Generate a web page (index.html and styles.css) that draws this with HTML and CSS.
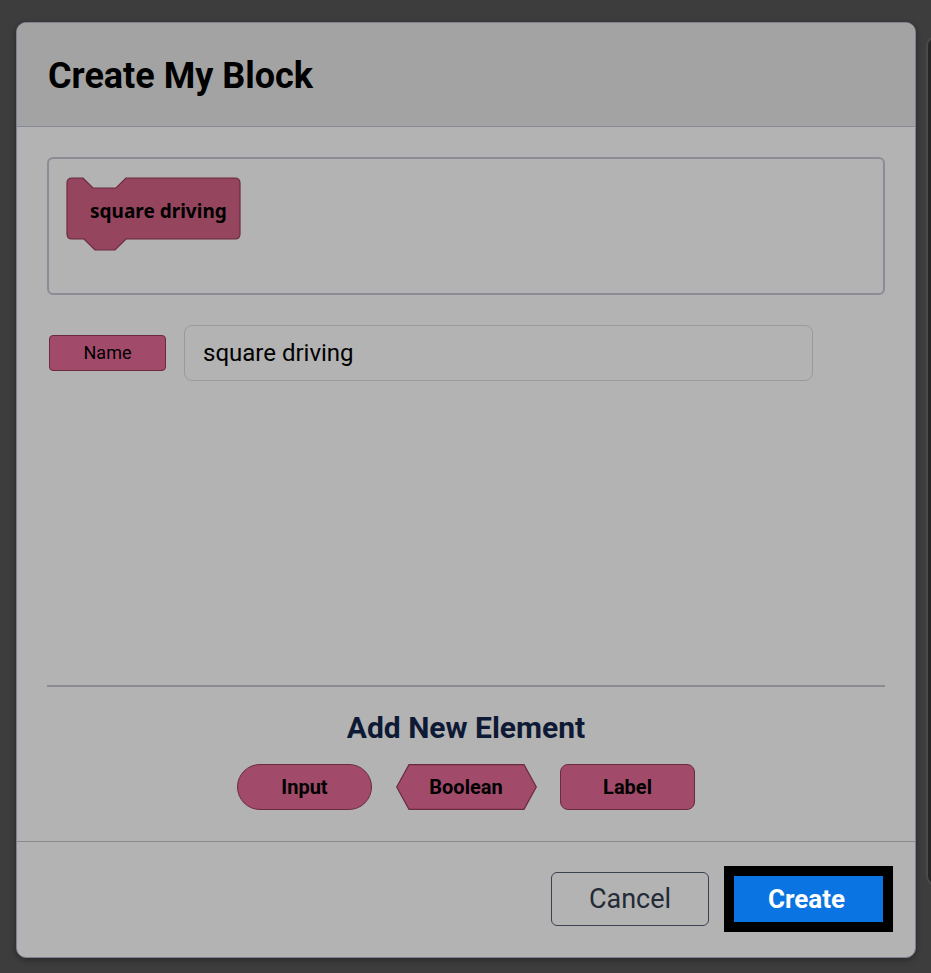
FILE: index.html
```html
<!DOCTYPE html>
<html lang="en">
<head>
    <meta charset="UTF-8">
    <meta name="viewport" content="width=device-width, initial-scale=1.0">
    <title>Create My Block</title>
    <link rel="stylesheet" href="styles.css">
</head>
<body>

    <div class="side-panel"></div>

    <div class="modal">
        <div class="modal-header">
            <h1>Create My Block</h1>
        </div>

        <div class="modal-body">
            <div class="preview">
                <div class="block">
                    <svg class="block-shape" width="176" height="74" viewBox="0 0 176 74">
                        <path d="M1,6 Q1,1 6,1 L17,1 L27,11 L50,11 L60,1 L169,1 Q174,1 174,6 L174,57 Q174,62 169,62 L60,62 L49,73 L29,73 L18,62 L6,62 Q1,62 1,57 Z"
                              fill="#95455e" stroke="#6a2b40" stroke-width="1.2"/>
                    </svg>
                    <span class="block-label">square driving</span>
                </div>
            </div>

            <div class="name-row">
                <span class="name-tag">Name</span>
                <input class="name-input" type="text" value="square driving">
            </div>

            <div class="spacer"></div>

            <div class="add-section">
                <h2>Add New Element</h2>
                <div class="element-buttons">
                    <button class="el-btn el-input">Input</button>
                    <button class="el-btn el-boolean">
                        <svg class="hex" width="141" height="46" viewBox="0 0 141 46">
                            <polygon points="13,0.6 128,0.6 140.3,23 128,45.4 13,45.4 0.7,23" fill="#a14a6a" stroke="#6a2b40" stroke-width="1.2"/>
                        </svg>
                        <span>Boolean</span>
                    </button>
                    <button class="el-btn el-label">Label</button>
                </div>
            </div>
        </div>

        <div class="modal-footer">
            <button class="btn-cancel">Cancel</button>
            <button class="btn-create">Create</button>
        </div>
    </div>

</body>
</html>
```

FILE: styles.css
```css
* {
    margin: 0;
    padding: 0;
    box-sizing: border-box;
}

body {
    font-family: Roboto, 'Liberation Sans', sans-serif;
    background-color: #3d3d3d;
    width: 931px;
    height: 973px;
    overflow: hidden;
    position: relative;
}

/* editor panel peeking out behind the dialog */
.side-panel {
    position: absolute;
    left: 926px;
    top: 36px;
    width: 30px;
    height: 850px;
    background: #262626;
    border: 2px solid #4a4a4a;
    border-radius: 10px;
}

.modal {
    position: absolute;
    left: 16px;
    top: 22px;
    width: 900px;
    height: 936px;
    background: #b3b3b3;
    border: 1px solid #7d8190;
    border-radius: 10px;
    box-shadow: 0 2px 6px rgba(0, 0, 0, 0.35);
    display: flex;
    flex-direction: column;
    overflow: hidden;
}

.modal-header {
    height: 104px;
    background: #a3a3a3;
    border-bottom: 1px solid #868a9a;
    display: flex;
    align-items: center;
    padding-left: 31px;
    padding-top: 2px;
}

h1 {
    font-size: 36px;
    font-weight: 700;
    color: #000;
}

.modal-body {
    flex: 1;
    display: flex;
    flex-direction: column;
    padding: 30px 30px 31px 30px;
}

.preview {
    height: 138px;
    border: 2px solid #8b8c97;
    border-radius: 6px;
    padding: 18px 0 0 17px;
}

.block {
    position: relative;
    width: 176px;
    height: 74px;
}

.block-shape {
    display: block;
}

.block-label {
    position: absolute;
    left: 24px;
    top: 21px;
    font-family: 'Noto Sans', sans-serif;
    font-size: 19px;
    font-weight: 700;
    color: #000;
}

.name-row {
    display: flex;
    align-items: center;
    margin-top: 30px;
    padding-left: 2px;
}

.name-tag {
    width: 117px;
    height: 36px;
    background: #a14a6a;
    border: 1px solid #6a2b40;
    border-radius: 4px;
    display: flex;
    align-items: center;
    justify-content: center;
    font-size: 18px;
    color: #000;
    padding-bottom: 2px;
}

.name-input {
    margin-left: 18px;
    width: 629px;
    height: 56px;
    background: transparent;
    border: 1px solid #999a9e;
    border-radius: 8px;
    padding: 0 18px;
    font-family: Roboto, sans-serif;
    font-size: 24px;
    color: #000;
    outline: none;
}

.spacer {
    flex: 1;
}

.add-section {
    border-top: 2px solid #8a8a92;
    text-align: center;
    padding-top: 24px;
}

h2 {
    font-size: 30px;
    line-height: 34px;
    font-weight: 700;
    color: #0e1a35;
}

.element-buttons {
    display: flex;
    justify-content: center;
    gap: 23.5px;
    margin-top: 19px;
}

.el-btn {
    width: 135px;
    height: 46px;
    background: #a14a6a;
    border: 1px solid #6a2b40;
    font-family: Roboto, sans-serif;
    font-size: 20px;
    font-weight: 700;
    color: #000;
}

.el-input {
    border-radius: 23px;
}

.el-label {
    border-radius: 8px;
}

.el-boolean {
    position: relative;
    width: 141px;
    background: none;
    border: none;
}

.el-boolean .hex {
    position: absolute;
    left: 0;
    top: 0;
}

.el-boolean span {
    position: relative;
}

.modal-footer {
    height: 116px;
    border-top: 1px solid #8a8a8e;
    display: flex;
    align-items: center;
    justify-content: flex-end;
    padding-right: 22px;
    padding-bottom: 2px;
}

.btn-cancel {
    width: 158px;
    height: 54px;
    background: transparent;
    border: 1px solid #3a4250;
    border-radius: 6px;
    font-family: Roboto, sans-serif;
    font-size: 27px;
    color: #232b36;
}

.btn-create {
    margin-left: 25px;
    width: 149px;
    height: 46px;
    background: #0a74e2;
    border: none;
    outline: 10px solid #000;
    font-family: Roboto, sans-serif;
    font-size: 26px;
    font-weight: 700;
    color: #fff;
    margin-right: 10px;
    padding-right: 4px;
}
```
